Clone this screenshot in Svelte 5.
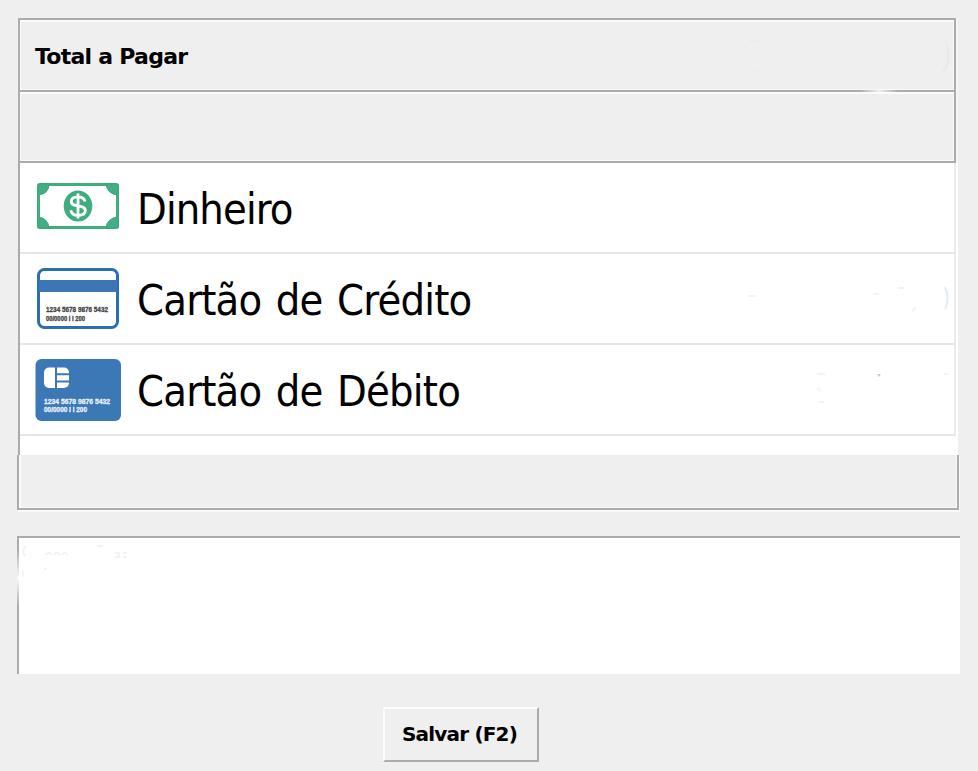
<script>
  const methods = [
    { id: 'cash', label: 'Dinheiro', spacing: '-0.9px' },
    { id: 'credit', label: 'Cartão de Crédito', spacing: '-0.8px' },
    { id: 'debit', label: 'Cartão de Débito', spacing: '-0.8px' }
  ];
  let notes = $state('');
</script>

<main>
  <section class="panel">
    <header class="bar">
      <h1>Total a Pagar</h1>
      <svg class="trace" width="205" height="36" viewBox="0 0 205 36" fill="none">
        <path d="M4 4h11M5 33h7" stroke="#e9e9e9" />
        <path d="M200 4c5 8 5 25-2 30" stroke="#e6e9ed" stroke-width="2" />
      </svg>
    </header>
    <div class="bar second"></div>
    <ul>
      {#each methods as m (m.id)}
        <li>
          <span class="icon {m.id}">
            {#if m.id === 'cash'}
              <svg width="86" height="64" viewBox="0 0 86 64">
                <rect x="3.5" y="10.5" width="79" height="43" rx="2" fill="#fff" stroke="#3fad80" stroke-width="3" />
                <path d="M3 10h11q0 10-11 11zM83 10H71q1 10 12 11zM3 54h11q-1-10-11-11zM83 54H71q1-10 12-11z" fill="#45ad82" stroke="#36a97a" />
                <ellipse cx="43" cy="32" rx="14.3" ry="15.6" fill="#3fad80" />
                <path d="M50 27.5c-.7-3.2-3.2-4.6-7-4.6-4 0-6.7 1.6-6.7 4.6 0 6.5 14 2.4 14 9 0 3-2.7 4.8-7 4.8s-7-1.6-7.5-5.1M43 19.5v25" fill="none" stroke="#fff" stroke-width="2.8" />
              </svg>
            {:else if m.id === 'credit'}
              <svg width="86" height="64" viewBox="0 0 86 64">
                <rect x="3.5" y="3.5" width="79" height="58" rx="6" fill="#fff" stroke="#2b6fb3" stroke-width="3" />
                <path d="M4 14h78v12H4z" fill="#3d76b4" />
                <g class="digits" fill="#444" stroke="#444">
                  <text x="11" y="45.6" textLength="62" lengthAdjust="spacingAndGlyphs">1234 5678 9876 5432</text>
                  <text x="11" y="54.8" textLength="39" lengthAdjust="spacingAndGlyphs">00/0000 I I 200</text>
                </g>
              </svg>
            {:else}
              <svg width="86" height="64" viewBox="0 0 86 64">
                <rect x=".5" y="1" width="85.5" height="62" rx="6" fill="#3d78b6" />
                <rect x="9" y="9.5" width="25" height="20.5" rx="5" fill="#fff" />
                <path d="M21 9v21M21 16.3h14M21 23.4h14" stroke="#3d78b6" stroke-width="2" />
                <g class="digits" fill="#e6f1fb" stroke="#e6f1fb">
                  <text x="9" y="46.2" textLength="66" lengthAdjust="spacingAndGlyphs">1234 5678 9876 5432</text>
                  <text x="9" y="54.2" textLength="43" lengthAdjust="spacingAndGlyphs">00/0000 I I 200</text>
                </g>
              </svg>
            {/if}
          </span>
          <span class="label" style:letter-spacing={m.spacing}>{m.label}</span>
          {#if m.id === 'credit'}
            <svg class="trace" width="205" height="36" viewBox="0 0 205 36" fill="none">
              <path d="M3 15h7M129 13h5M153 7h6M167 30l4-3" stroke="#f3f3f3" stroke-width="2" />
              <path d="M200 6q5 12 0 22" stroke="#e0edf8" stroke-width="2" />
            </svg>
          {:else if m.id === 'debit'}
            <svg class="trace" width="205" height="36" viewBox="0 0 205 36" fill="none">
              <path d="M72 2h8M199 2h4M72 16l4 3M74 30h5" stroke="#f3f3f3" stroke-width="2" />
              <path d="M132 2h4l-2 3z" fill="#c5ccd8" />
            </svg>
          {/if}
        </li>
      {/each}
    </ul>
  </section>
  <footer class="foot"></footer>
  <div class="notes">
    <textarea bind:value={notes} aria-label="Notas"></textarea>
    <svg class="smudge" width="112" height="40" viewBox="0 0 112 40" fill="none" stroke="#f0efed" stroke-width="1.5">
      <path d="M9 3q-5 5-1 10M29 12q3-5 5 0M37 12q3-5 6 0M45 12q3-5 5 0M80 3h6M98 10h4v4h-4M106 10h4M106 14h4M6 28v6M27 26h3" />
    </svg>
  </div>
  <button type="button">Salvar (F2)</button>
</main>

<style>
  :global(body) {
    margin: 0;
    background: #efefef;
  }
  main {
    box-sizing: border-box;
    width: 978px;
    height: 771px;
    padding: 18px 18px 0 17px;
    display: flex;
    flex-direction: column;
    overflow: hidden;
    background: #efefef;
    color: #000;
    font-family: 'DejaVu Sans Condensed', 'DejaVu Sans', sans-serif;
    font-stretch: condensed;
  }
  .panel {
    box-sizing: border-box;
    width: 940px;
    height: 437px;
    margin-left: 1px;
    display: flex;
    flex-direction: column;
    border-left: 2px solid #acacac;
    background: #fff;
  }
  .bar {
    box-sizing: border-box;
    width: 936px;
    height: 72px;
    display: flex;
    align-items: center;
    justify-content: space-between;
    padding: 0 4px 0 15px;
    background: #efefef;
    border-top: 2px solid #acacac;
    border-right: 2px solid #acacac;
    box-shadow: inset 1px 2px #fbfbfb, inset -1px -1px #f8f8f8, 2px 0 #f5f5f5;
  }
  .second {
    position: relative;
    height: 73px;
    border-bottom: 2px solid #acacac;
  }
  .second::before {
    content: '';
    position: absolute;
    top: -2px;
    right: 56px;
    width: 38px;
    height: 2px;
    background: linear-gradient(90deg, #efefef00, #efefef 50%, #efefef00);
  }
  h1 {
    margin: 4px 0 0;
    font: 700 22px/30px 'DejaVu Sans', sans-serif;
    font-stretch: normal;
    letter-spacing: -0.75px;
  }
  ul {
    flex: 1;
    list-style: none;
    margin: 0;
    padding: 0;
    display: flex;
    flex-direction: column;
  }
  li {
    box-sizing: border-box;
    width: 936px;
    height: 91px;
    display: flex;
    align-items: center;
    padding: 0 4px 0 15px;
    border-bottom: 2px solid #e6e6e6;
    border-right: 2px solid #eaeaea;
  }
  .icon {
    display: flex;
    margin-top: -4px;
  }
  .credit {
    margin-top: -2px;
  }
  .debit {
    margin-top: 0;
  }
  .label {
    margin: 3px auto 0 16px;
    font-size: 43px;
    line-height: 56px;
    word-spacing: 3px;
    white-space: nowrap;
  }
  .trace {
    flex: none;
  }
  .digits {
    font: 700 6.5px 'Liberation Sans', sans-serif;
    stroke-width: 0.3px;
  }
  .foot {
    box-sizing: border-box;
    width: 942px;
    height: 55px;
    border: 2px solid #acacac;
    border-top: 0;
    box-shadow: inset 2px 0 #fafafa, inset -1px -1px #f8f8f8, 1px 2px #fafafa;
  }
  .notes {
    position: relative;
    display: flex;
    margin-top: 26px;
  }
  .notes::before {
    content: '';
    position: absolute;
    left: 0;
    top: 14px;
    width: 2px;
    height: 56px;
    background: linear-gradient(#fafafa00, #fafafa 50%, #fafafa00);
  }
  .smudge {
    position: absolute;
    left: 0;
    top: 7px;
    pointer-events: none;
  }
  textarea {
    box-sizing: border-box;
    width: 943px;
    height: 138px;
    margin: 0;
    padding: 8px;
    resize: none;
    outline: 0;
    border: solid #acacac;
    border-width: 2px 0 0 2px;
    border-radius: 0;
    background: #fff;
    font: 22px 'DejaVu Sans Condensed', sans-serif;
  }
  button {
    box-sizing: border-box;
    width: 156px;
    height: 55px;
    margin: 33px 0 0 366px;
    padding: 0 3px 2px 0;
    border: 2px solid;
    border-color: #fcfcfc #acacac #acacac #fcfcfc;
    border-radius: 0;
    background: #efefef;
    color: #000;
    font: 700 20px 'DejaVu Sans', sans-serif;
    letter-spacing: -0.8px;
  }
</style>
